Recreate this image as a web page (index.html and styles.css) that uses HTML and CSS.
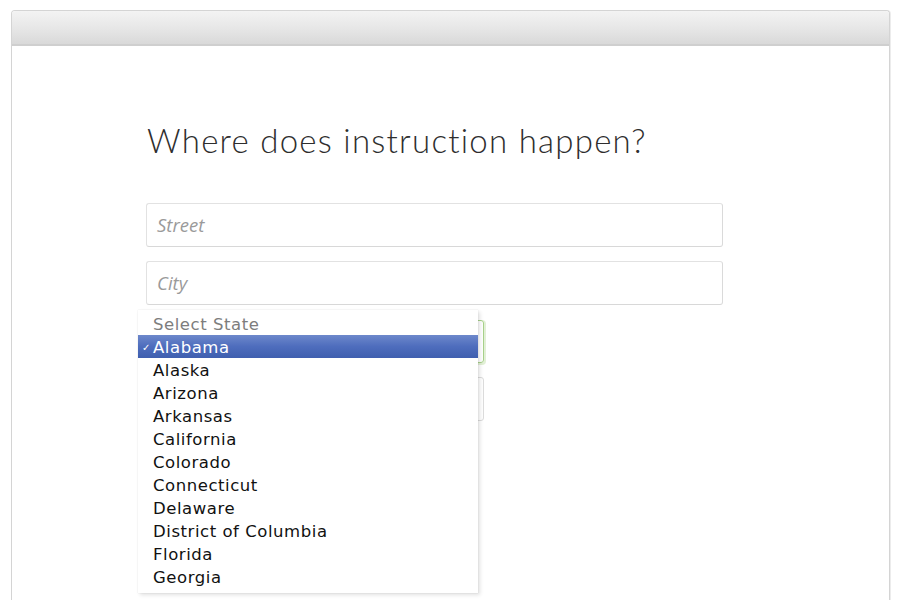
FILE: index.html
```html
<!DOCTYPE html>
<html>
<head>
<meta charset="utf-8">
<link rel="stylesheet" href="styles.css">
</head>
<body>
<div class="card">
  <div class="card-header"></div>
  <div class="content">
    <h1 class="title">Where does instruction happen?</h1>
    <div class="form">
      <div class="field">Street</div>
      <div class="field">City</div>
      <div class="select-wrap">
        <div class="select focused"></div>
        <ul class="menu">
          <li class="opt placeholder">Select State</li>
          <li class="opt selected"><span class="check">✓</span>Alabama</li>
          <li class="opt">Alaska</li>
          <li class="opt">Arizona</li>
          <li class="opt">Arkansas</li>
          <li class="opt">California</li>
          <li class="opt">Colorado</li>
          <li class="opt">Connecticut</li>
          <li class="opt">Delaware</li>
          <li class="opt">District of Columbia</li>
          <li class="opt">Florida</li>
          <li class="opt">Georgia</li>
        </ul>
      </div>
      <div class="select"></div>
    </div>
  </div>
</div>
</body>
</html>
```
FILE: styles.css
```css
html, body {
  margin: 0;
  padding: 0;
  background: #ffffff;
  overflow: hidden;
}
.card {
  margin: 10px 10px 0 11px;
  height: 600px;
  border: 1px solid #d4d4d4;
  border-bottom: none;
  border-radius: 4px 4px 0 0;
  box-shadow: 1px 0 0 #ececec;
  background: #fff;
}
.card-header {
  height: 33px;
  border-bottom: 2px solid #cfcfcf;
  border-radius: 3px 3px 0 0;
  background: linear-gradient(#f3f3f3, #e6e6e6 55%, #d9d9d9);
}
.content {
  padding: 0 0 0 134px;
}
.title {
  margin: 74px 0 0 1px;
  font-family: "Lato", sans-serif;
  font-weight: 300;
  font-size: 33px;
  line-height: 40px;
  letter-spacing: 1.25px;
  color: #2e2e2e;
}
.form {
  margin-top: 43px;
  width: 577px;
  display: flex;
  flex-direction: column;
  gap: 14px;
}
.field {
  box-sizing: border-box;
  height: 44px;
  border: 1px solid #e2e2e2;
  border-right-color: #dadada;
  border-bottom-color: #d8d8d8;
  border-radius: 3px;
  padding: 0 10px;
  font-family: "Open Sans", sans-serif;
  font-style: italic;
  font-size: 18.5px;
  line-height: 42px;
  color: #9a9a9a;
}
.select-wrap {
  position: relative;
  margin-top: 1px;
}
.select {
  box-sizing: border-box;
  width: 338px;
  height: 44px;
  border: 1px solid #dcdcdc;
  border-radius: 3px;
}
.select.focused {
  height: 43px;
  border-color: #a8d18a;
  box-shadow: 1px 1px 0 1px #e2f0d6;
}
.menu {
  position: absolute;
  left: -8px;
  top: -10px;
  width: 340px;
  margin: 0;
  padding: 2px 0 5px;
  list-style: none;
  background: #fff;
  box-shadow: 0 0 1px rgba(0,0,0,0.15), 2px 2px 4px rgba(0,0,0,0.12);
  font-family: "DejaVu Sans", sans-serif;
  font-size: 16.5px;
  letter-spacing: 0.55px;
  color: #111;
}
.opt {
  position: relative;
  height: 23px;
  line-height: 26px;
  padding-left: 15px;
}
.opt.placeholder {
  color: #7d7d7d;
}
.opt.selected {
  color: #fff;
  background: linear-gradient(#6d88cb, #4e6dbd 50%, #3f5faf);
}
.check {
  position: absolute;
  left: 4px;
  top: 0;
  font-size: 10px;
}
```
